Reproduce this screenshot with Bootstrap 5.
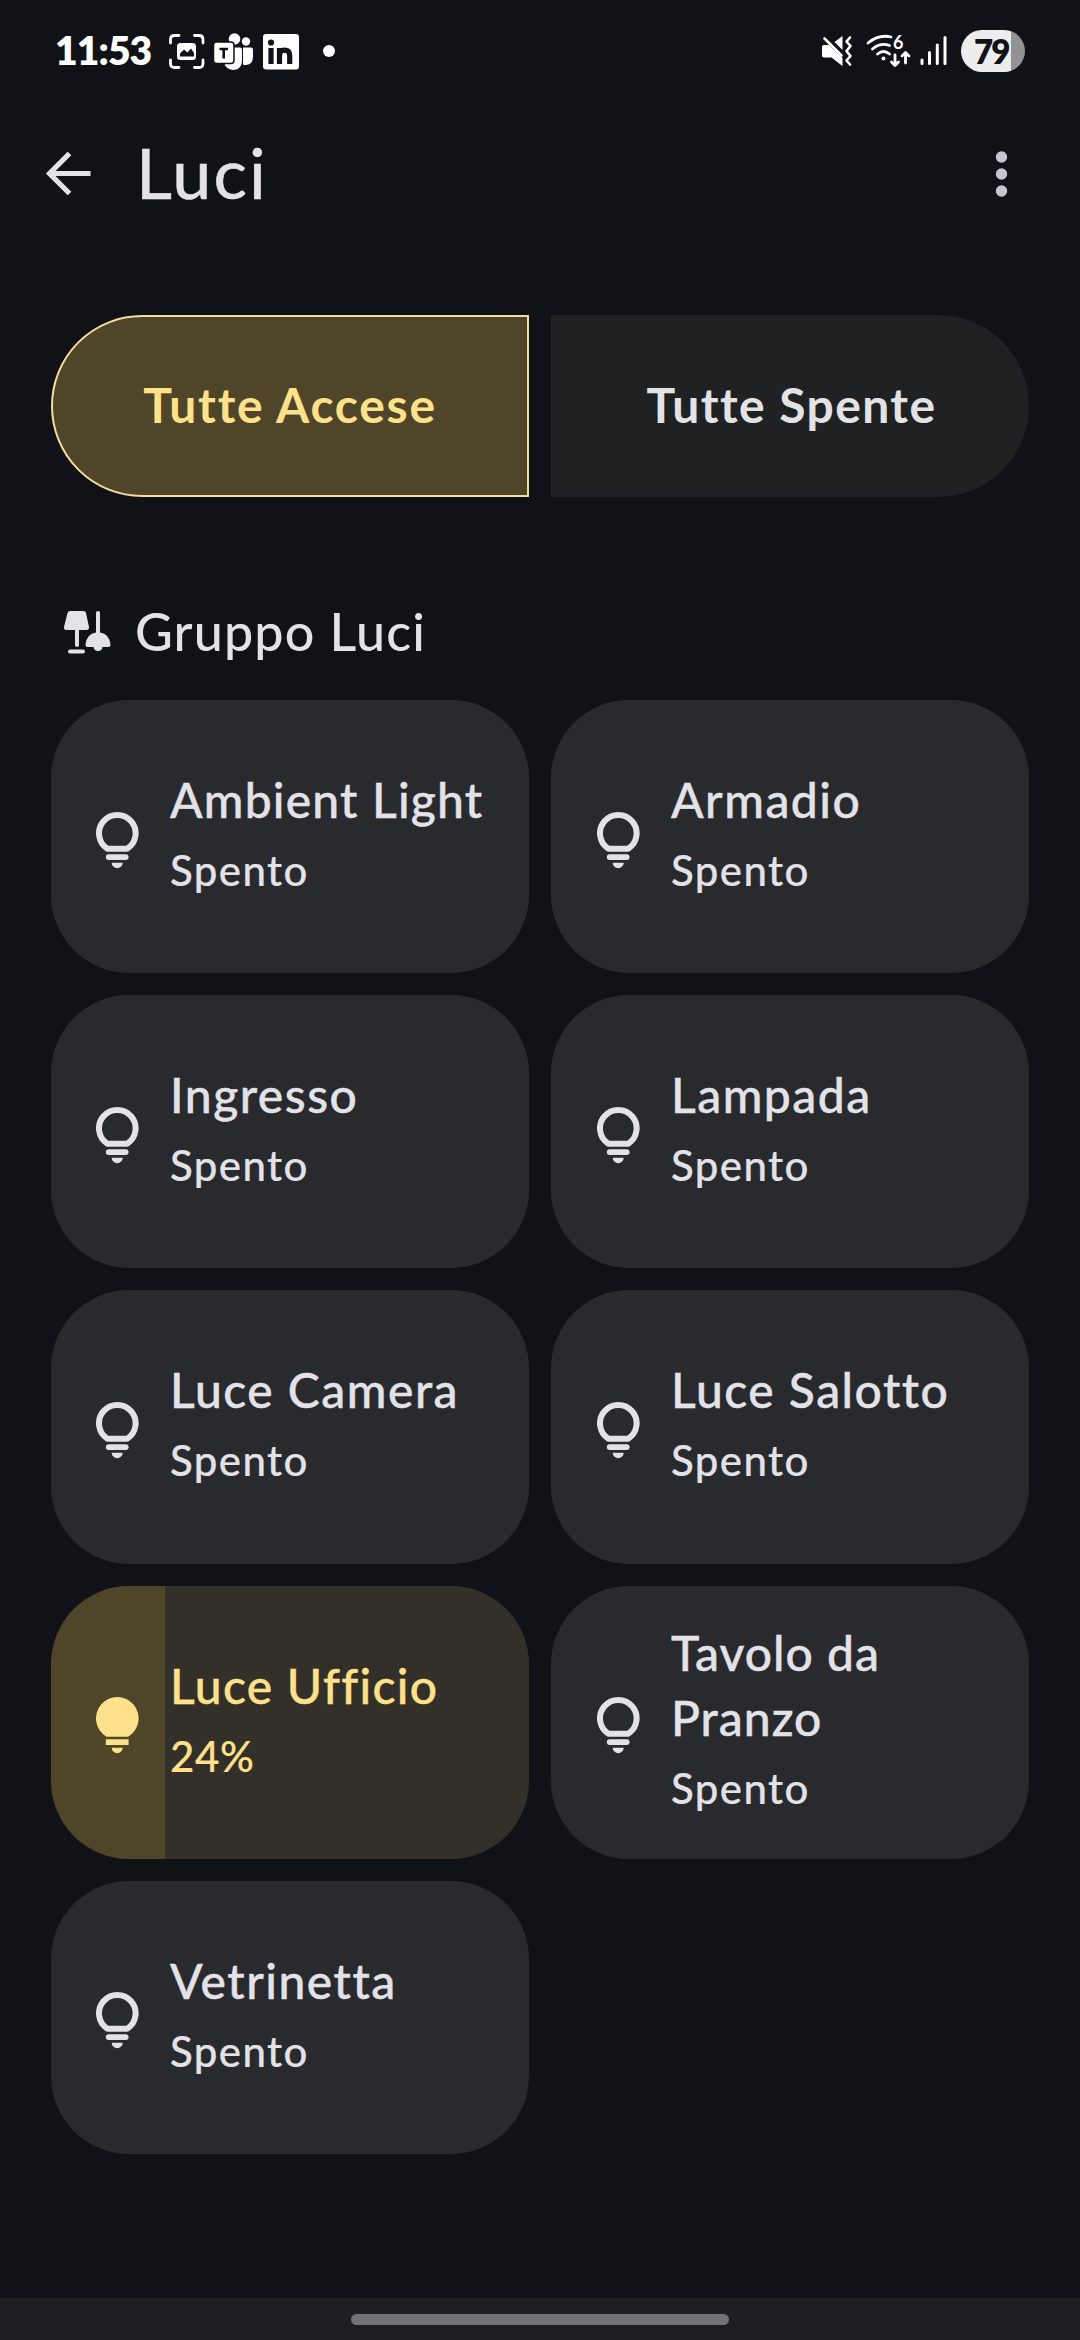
<!DOCTYPE html>
<html lang="it" data-bs-theme="dark">
<head>
<meta charset="utf-8">
<meta name="viewport" content="width=device-width, initial-scale=1">
<title>Luci</title>
<link href="https://cdn.jsdelivr.net/npm/bootstrap@5.3.0/dist/css/bootstrap.min.css" rel="stylesheet">
<style>
body{background:#111217;color:#e3e2e9;font-family:Lato,"Noto Sans",sans-serif;height:2340px;overflow:hidden}
svg{display:block;flex:none}
.status-row{height:102px;padding:0 55px 0 55px;color:#fff}
.clock{font-size:39px;font-weight:800;line-height:47px;letter-spacing:-.9px;width:114px;padding-bottom:1px}
.battery{width:64px;height:42px;border-radius:21px;margin-left:12px;background:linear-gradient(90deg,#ededed 50px,#929293 50px);color:#111217;font-size:33px;font-weight:800;line-height:42px;letter-spacing:-1.8px;padding-left:13px}
.app-head{height:143px;padding:0 72px 0 45px}
.app-title{font-size:70px;line-height:84px;letter-spacing:2.2px;margin:0 0 3px 45px;font-weight:400;color:inherit;-webkit-text-stroke:.6px}
main{padding:70px 51px 0}
.duo{gap:22px}
.pill{height:182px;border:0;border-radius:0;font-size:48px;font-weight:700;letter-spacing:1.7px;padding:0 0 3px}
.pill-on{background:#4f4528;color:#ffe08b;border:2px solid #f3dc9c;border-radius:91px 0 0 91px}
.pill-off{background:#202122;color:#e3e2e5;border-radius:0 91px 91px 0;letter-spacing:1.4px;padding-left:3px}
.group-head{margin:103px 0 35px;height:65px;padding-left:13px;gap:24px}
.group-head h2{font-size:52px;line-height:65px;letter-spacing:1.1px;font-weight:500;margin:-2px 0 0;color:inherit}
.lights{display:grid;grid-template-columns:1fr 1fr;gap:22px;grid-auto-rows:273.2px}
.tile{background:#292a2d;border-radius:78px;padding:2px 20px 0 45px;gap:31px}
.tile:nth-child(even){padding-left:46px}
.tile svg{margin-top:5px}
.tile-name{font-size:48px;line-height:65px;font-weight:500;letter-spacing:1.5px;-webkit-text-stroke:.4px}
.tile:first-child .tile-name{letter-spacing:1.2px}
.tile:nth-child(7) .tile-name{letter-spacing:1.3px}
.tile:nth-child(8) .tile-name{letter-spacing:1px}
.tile-state{font-size:42px;line-height:60px;font-weight:500;letter-spacing:1.4px;margin:8px 0;-webkit-text-stroke:.2px}
.tile-on{color:#ffe08b;background:linear-gradient(90deg,#4f4528 114px,#33302a 114px)}
.tile-on .tile-state{letter-spacing:.6px}
.nav-strip{height:42px;background:#1e1f23}
.nav-handle{width:378px;height:11px;border-radius:6px;background:#717276;margin-top:1px}
</style>
<script src="https://cdn.jsdelivr.net/npm/bootstrap@5.3.0/dist/js/bootstrap.bundle.min.js"></script>
</head>
<body class="d-flex flex-column">
<svg width="0" height="0" class="position-absolute" aria-hidden="true">
  <symbol id="bulb" viewBox="0 0 43 57">
    <path d="M11.4 36.7A18.3 18.3 0 1 1 31.2 36.7Z" fill="none" stroke="currentColor" stroke-width="6" stroke-linejoin="round"/>
    <rect x="9.8" y="42.2" width="22.8" height="5.8" rx="2.9" fill="currentColor"/>
    <path d="M15.7 50.7h11a5.5 5.5 0 0 1-11 0z" fill="currentColor"/>
  </symbol>
  <symbol id="bulb-on" viewBox="0 0 43 57">
    <path d="M10.5 39.7A21.3 21.3 0 1 1 32.1 39.7Z" fill="currentColor"/>
    <path d="M9.8 42.3h22.8v5.6H9.8zM15.7 50.7h11a5.5 5.5 0 0 1-11 0z" fill="currentColor"/>
  </symbol>
</svg>

<div class="status-row d-flex align-items-center">
  <div class="clock">11:53</div>
  <svg width="166" height="40" viewBox="169 31 166 40" fill="currentColor">
    <path d="M170.500 43v-3.500q0-4 4-4h4.500M194.500 35.500h4.500q4 0 4 4v3.500M203 60v3.500q0 4-4 4h-4.500M179 67.500h-4.500q-4 0-4-4V60" fill="none" stroke="currentColor" stroke-width="2.800" stroke-linecap="round"/>
    <rect x="177" y="43" width="19" height="17" rx="3.500"/>
    <path d="M180 56.500v-3l4-4 3.500 3 3.500-4 3 4.500v3.500z" fill="#111217"/>
    <circle cx="234.500" cy="39" r="5.800"/><circle cx="246" cy="41.500" r="4.200"/>
    <path d="M243 47.500h8q2 0 2 2v7q0 8-7 8.500-2 0-3-.5z"/>
    <path d="M224 47.500h16q2 0 2 2v11q0 9-8.500 9.500-7 0-9.500-7z"/>
    <rect x="213.500" y="42" width="20.500" height="21.500" rx="3" stroke="#111217" stroke-width="1.500"/>
    <path d="M219.500 49h8.500M223.700 49v9.500" stroke="#111217" stroke-width="2.600"/>
    <rect x="263" y="34" width="36" height="35.500" rx="3"/>
    <g fill="none" stroke="#111217" stroke-width="5.200"><circle cx="271" cy="42.500" r="3.100" fill="#111217" stroke="none"/><path d="M271 48v16M279.500 48v16M279.500 56q0-5.800 5-5.800 5.200 0 5.200 5.800v8"/></g>
    <circle cx="329" cy="51" r="6"/>
  </svg>
  <svg class="ms-auto" width="128" height="50" viewBox="821 26 128 50" fill="currentColor">
    <path d="M824 45h5l13.500 13v8l-11-8.500h-7.500q-2 0-2-2v-8.500q0-2 2-2zM834.500 42l8-6v14z"/>
    <path d="M824.500 38.500l17 17" stroke="currentColor" stroke-width="2.600" stroke-linecap="round"/>
    <path d="M850 37.500l-3.500 4 4 4.500-4 5 4 5-4 4.500 3.500 4" fill="none" stroke="currentColor" stroke-width="2.600" stroke-linecap="round" stroke-linejoin="round"/>
    <g fill="none" stroke="currentColor" stroke-width="2.800" stroke-linecap="round" stroke-linejoin="round">
      <path d="M868 43q11-9 23-6M872.500 49q8-7 17-3.500M877.500 54q6-5 12 0"/>
      <path d="M895 55v10M891.500 62l3.500 3.500 3.500-3.500M905.500 63V53M902 56l3.500-3.500 3.500 3.500"/>
    </g>
    <text x="893" y="49" font-size="18" font-weight="700">6</text>
    <circle cx="883.500" cy="58.500" r="2"/>
    <path d="M922 60v3.500M929.500 52.500v11M937.300 45v18.500M945 37.500v26" stroke="currentColor" stroke-width="3" stroke-linecap="round"/>
  </svg>
  <div class="battery flex-shrink-0">79</div>
</div>

<header class="app-head d-flex align-items-center">
  <svg width="46" height="44" viewBox="45 152 46 44"><path d="M90.500 173.500H50M69.500 153.500L49.500 173.500L69.500 193.500" fill="none" stroke="currentColor" stroke-width="5.200"/></svg>
  <h1 class="app-title">Luci</h1>
  <svg class="ms-auto" width="13" height="46" viewBox="0 0 13 46" fill="#c7c6d0"><circle cx="6.500" cy="6" r="5.700"/><circle cx="6.500" cy="23" r="5.700"/><circle cx="6.500" cy="40" r="5.700"/></svg>
</header>

<main class="flex-grow-1">
  <div class="duo d-flex">
    <button class="btn pill pill-on flex-fill w-50">Tutte Accese</button>
    <button class="btn pill pill-off flex-fill w-50">Tutte Spente</button>
  </div>
  <div class="group-head d-flex align-items-center">
    <svg width="47" height="44" viewBox="0 0 47 44" fill="currentColor">
      <path d="M6.500 0h13q2 0 2.500 2l3 14q.4 3-2.500 3H2.500Q-.4 19 0 16L3.500 2Q4 0 6.500 0z"/>
      <rect x="11" y="17" width="4" height="19" rx="2"/><rect x="4" y="38.500" width="17" height="4" rx="2"/>
      <path d="M32 2q0-2 2-2t2 2v19.500q9.500 1.500 10.500 12 .2 2.500-2 2.500h-6q-.5 4-4.500 4t-4.500-4h-6q-2.200 0-2-2.500Q22.500 23 32 21.500z"/>
    </svg>
    <h2>Gruppo Luci</h2>
  </div>
  <div class="lights">
    <div class="tile d-flex align-items-center"><svg width="43" height="57"><use href="#bulb"/></svg><div><div class="tile-name">Ambient Light</div><div class="tile-state">Spento</div></div></div>
    <div class="tile d-flex align-items-center"><svg width="43" height="57"><use href="#bulb"/></svg><div><div class="tile-name">Armadio</div><div class="tile-state">Spento</div></div></div>
    <div class="tile d-flex align-items-center"><svg width="43" height="57"><use href="#bulb"/></svg><div><div class="tile-name">Ingresso</div><div class="tile-state">Spento</div></div></div>
    <div class="tile d-flex align-items-center"><svg width="43" height="57"><use href="#bulb"/></svg><div><div class="tile-name">Lampada</div><div class="tile-state">Spento</div></div></div>
    <div class="tile d-flex align-items-center"><svg width="43" height="57"><use href="#bulb"/></svg><div><div class="tile-name">Luce Camera</div><div class="tile-state">Spento</div></div></div>
    <div class="tile d-flex align-items-center"><svg width="43" height="57"><use href="#bulb"/></svg><div><div class="tile-name">Luce Salotto</div><div class="tile-state">Spento</div></div></div>
    <div class="tile tile-on d-flex align-items-center"><svg width="43" height="57"><use href="#bulb-on"/></svg><div><div class="tile-name">Luce Ufficio</div><div class="tile-state">24%</div></div></div>
    <div class="tile d-flex align-items-center"><svg width="43" height="57"><use href="#bulb"/></svg><div><div class="tile-name">Tavolo da<br>Pranzo</div><div class="tile-state">Spento</div></div></div>
    <div class="tile d-flex align-items-center"><svg width="43" height="57"><use href="#bulb"/></svg><div><div class="tile-name">Vetrinetta</div><div class="tile-state">Spento</div></div></div>
  </div>
</main>
<div class="nav-strip d-flex align-items-center justify-content-center"><div class="nav-handle"></div></div>
</body>
</html>
